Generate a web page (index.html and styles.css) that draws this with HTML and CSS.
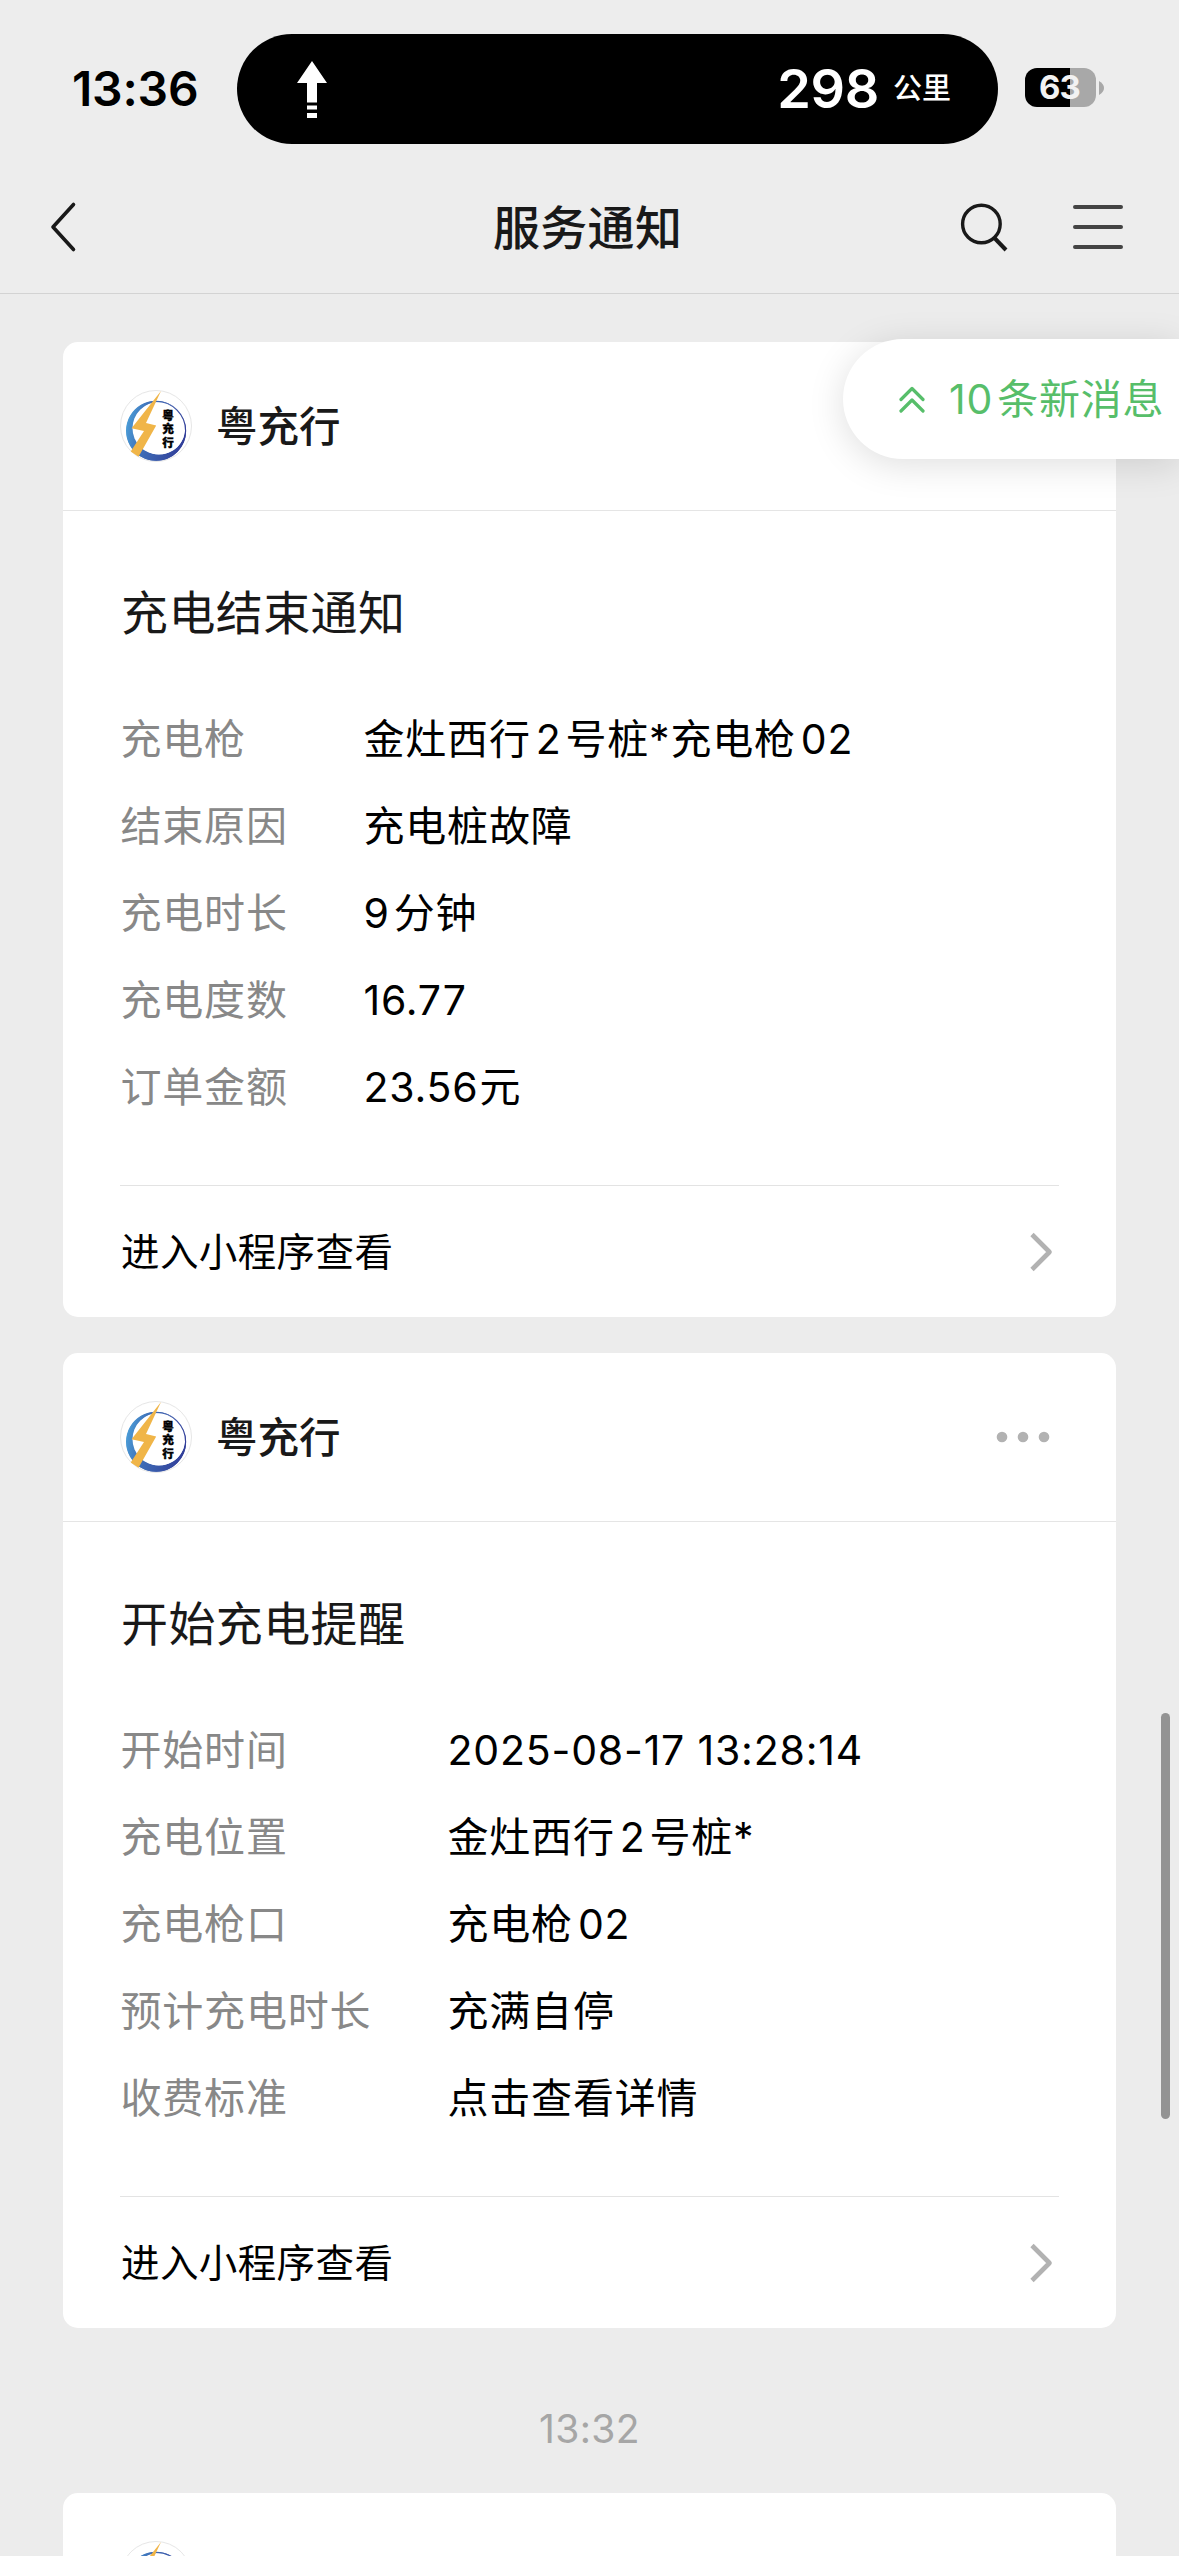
FILE: index.html
```html
<!DOCTYPE html>
<html lang="zh-CN">
<head>
<meta charset="utf-8">
<title>服务通知</title>
<link rel="stylesheet" href="styles.css">
</head>
<body>
<svg class="defs" width="0" height="0" aria-hidden="true">
  <defs>
    <linearGradient id="ring" x1="0" y1="0.4" x2="1" y2="0.6">
      <stop offset="0" stop-color="#4a9bd6"/>
      <stop offset="0.3" stop-color="#3f6fb8"/>
      <stop offset="1" stop-color="#303c98"/>
    </linearGradient>
    <symbol id="avatar" viewBox="0 0 72 72">
      <circle cx="36" cy="36" r="35.500" fill="#fff" stroke="#e6e6e6"/>
      <path fill="url(#ring)" fill-rule="evenodd" d="M36 10.800a30 30 0 1 0 .01 0zM39.200 12.300a26 26 0 1 1-.01 0z"/>
      <circle cx="38.800" cy="38.300" r="26.300" fill="#fff"/>
      <circle cx="36.300" cy="40.800" r="29.300" fill="none" stroke="url(#ring)" stroke-width="1.200"/>
      <path fill="#f0b548" d="M41 1 11.500 38.300 24 41 10.700 61.500 18.500 66.700 36.200 35.500 26 33z"/>
      <g class="avatar-text"><text x="42.300" y="29.500">粤</text><text x="42.300" y="43.300">充</text><text x="42.300" y="57">行</text></g>
    </symbol>
    <symbol id="arrow" viewBox="0 0 24 40"><path d="M3 2.500 20.500 20 3 37.500" fill="none" stroke="#b2b2b2" stroke-width="4.600" stroke-linejoin="round"/></symbol>
  </defs>
</svg>
<div class="screen">
  <header class="top">
    <div class="status">
      <span class="clock">13:36</span>
      <div class="island">
        <svg width="32" height="57" viewBox="0 0 32 57" fill="#fff"><path d="M16 0 31 22H21V41.500H11V22H1zM11 44.500h10v4H11zM11 52h10v5H11z"/></svg>
        <div class="distance"><b>298</b><span>公里</span></div>
      </div>
      <div class="battery"><span>63</span></div>
      <svg class="nub" width="5" height="14" viewBox="0 0 5 14"><path d="M0 0Q5 3 5 7T0 14z" fill="#a8a8a8"/></svg>
    </div>
    <nav class="nav">
      <svg class="back" width="28" height="52" viewBox="0 0 28 52" fill="none" stroke="#191919" stroke-width="3.600" stroke-linecap="round" stroke-linejoin="round"><path d="M24.500 3.500 4 26 24.500 48.500"/></svg>
      <h1>服务通知</h1>
      <svg class="search" width="48" height="50" viewBox="0 0 48 50" fill="none" stroke="#191919" stroke-width="3.400"><circle cx="21.400" cy="22" r="18.800"/><path d="M34 35.500 46 48" stroke-width="4"/></svg>
      <svg class="menu" width="50" height="44" viewBox="0 0 50 44" stroke="#444" stroke-width="4" stroke-linecap="round"><path d="M2 2h46M2 22h46M2 42h46"/></svg>
    </nav>
  </header>

  <main class="feed">
    <article class="card">
      <div class="card-head"><svg class="avatar"><use href="#avatar"/></svg><span class="name">粤充行</span></div>
      <div class="card-body">
        <h2>充电结束通知</h2>
        <dl class="rows">
          <dt>充电枪</dt><dd>金灶西行<i class="mid">2</i>号桩*充电枪<i class="end">02</i></dd>
          <dt>结束原因</dt><dd>充电桩故障</dd>
          <dt>充电时长</dt><dd><i class="start">9</i>分钟</dd>
          <dt>充电度数</dt><dd>16.77</dd>
          <dt>订单金额</dt><dd><i class="start amount">23.56</i>元</dd>
        </dl>
        <div class="more"><span>进入小程序查看</span><svg class="go"><use href="#arrow"/></svg></div>
      </div>
    </article>

    <article class="card">
      <div class="card-head"><svg class="avatar"><use href="#avatar"/></svg><span class="name">粤充行</span><svg class="dots" width="54" height="12" viewBox="0 0 54 12" fill="#b2b2b2"><circle cx="6" cy="6" r="5.300"/><circle cx="27" cy="6" r="5.300"/><circle cx="48" cy="6" r="5.300"/></svg></div>
      <div class="card-body">
        <h2>开始充电提醒</h2>
        <dl class="rows wide">
          <dt>开始时间</dt><dd>2025-08-17 13:28:14</dd>
          <dt>充电位置</dt><dd>金灶西行<i class="mid">2</i>号桩*</dd>
          <dt>充电枪口</dt><dd>充电枪<i class="end">02</i></dd>
          <dt>预计充电时长</dt><dd>充满自停</dd>
          <dt>收费标准</dt><dd>点击查看详情</dd>
        </dl>
        <div class="more"><span>进入小程序查看</span><svg class="go"><use href="#arrow"/></svg></div>
      </div>
    </article>

    <time class="stamp">13:32</time>

    <article class="card">
      <div class="card-head"><svg class="avatar"><use href="#avatar"/></svg></div>
    </article>
  </main>

  <div class="unread">
    <svg width="26" height="27" viewBox="0 0 26 27" fill="none" stroke="#57be6a" stroke-width="3.200" stroke-linecap="round" stroke-linejoin="round"><path d="M2 13.500 13 2.500 24 13.500M2 25 13 14 24 25"/></svg>
    <span><i class="start">10</i>条新消息</span>
  </div>
  <div class="scrollbar"></div>
</div>
</body>
</html>
```
FILE: styles.css
```css
* { box-sizing: border-box; margin: 0; padding: 0; }

body {
  background: #ececec;
  font-family: Inter, "Noto Sans CJK SC", sans-serif;
  color: #000;
}

i { font-style: normal; }
svg { display: block; flex: none; }
.defs { position: absolute; }

.screen {
  position: relative;
  width: 1179px;
  height: 2556px;
  overflow: hidden;
}

/* status bar and navigation */
.top {
  height: 294px;
  background: #ededed;
  border-bottom: 1px solid #d3d3d3;
}

.status {
  display: flex;
  align-items: center;
  height: 178px;
  padding-left: 72px;
}

.clock {
  width: 165px;
  margin-top: -1px;
  font-size: 48px;
  font-weight: 600;
  line-height: 60px;
  letter-spacing: -0.2px;
}

.island {
  display: flex;
  align-items: center;
  justify-content: space-between;
  width: 761px;
  height: 110px;
  padding: 0 47px 0 59px;
  border-radius: 55px;
  background: #000;
  color: #fff;
}

.distance { display: flex; align-items: center; gap: 14px; }
.distance b { font-size: 54px; font-weight: 600; line-height: 60px; letter-spacing: -0.3px; }
.distance span { font-size: 29px; font-weight: 500; line-height: 40px; }

.battery {
  width: 71px;
  height: 39px;
  margin: -3px 3px 0 27px;
  padding-right: 2px;
  border-radius: 12px;
  background: linear-gradient(90deg, #000 45px, #a8a8a8 45px);
  color: #f2f2f2;
  font-size: 33px;
  font-weight: 700;
  line-height: 39px;
  text-align: center;
  letter-spacing: -0.8px;
}
.nub { margin-top: -3px; }

.nav {
  display: grid;
  grid-template-columns: 28px 1fr 48px 50px;
  align-items: center;
  height: 98px;
  padding: 0 56px 0 49px;
}
.nav h1 {
  margin-left: 416px;
  padding-top: 1px;
  color: #191919;
  font-size: 47px;
  font-weight: 500;
  line-height: 60px;
  letter-spacing: 0.3px;
  white-space: nowrap;
}
.search { margin-left: -65px; }

/* message list */
.feed {
  display: flex;
  flex-direction: column;
  padding: 48px 63px 0;
}

.card {
  flex: none;
  height: 975px;
  margin-bottom: 36px;
  border-radius: 15px;
  background: #fff;
}

.card-head {
  display: flex;
  align-items: center;
  height: 169px;
  padding: 0 66px 0 57px;
  border-bottom: 1px solid #e5e5e5;
}
.avatar { width: 72px; height: 72px; }
.avatar-text {
  fill: #000;
  stroke: #000;
  stroke-width: 0.4px;
  font-size: 11.5px;
  font-weight: 900;
}
.name {
  margin-left: 24px;
  padding-top: 1px;
  color: #191919;
  font-size: 41.5px;
  font-weight: 500;
  line-height: 60px;
}
.dots { margin-left: auto; }

.card-body { padding: 67px 57px 0; }
.card-body h2 {
  padding-left: 1px;
  color: #191919;
  font-size: 47px;
  font-weight: 400;
  line-height: 70px;
  letter-spacing: 0.4px;
}

.rows {
  display: grid;
  grid-template-columns: 243px 1fr;
  grid-auto-rows: 87px;
  margin: 48px 0 54px;
  padding-left: 0.5px;
  font-size: 41px;
  line-height: 87px;
  letter-spacing: 0.8px;
  white-space: nowrap;
}
.rows.wide { grid-template-columns: 327px 1fr; }
.rows dt { color: #888; }
.mid { margin: 0 4px 0 5px; }
.end { margin-left: 5px; }
.start { margin-right: 4px; }
.amount { margin-right: 1px; }

.more {
  display: flex;
  align-items: center;
  justify-content: space-between;
  height: 132px;
  padding: 0 6px 0 1px;
  border-top: 1px solid #e3e3e3;
  font-size: 38.5px;
  line-height: 60px;
  letter-spacing: 0.4px;
}
.go { width: 24px; height: 40px; }

.stamp {
  height: 129px;
  color: #a6a6a6;
  font-size: 39px;
  line-height: 130px;
  letter-spacing: 0.4px;
  text-align: center;
}

/* floating layers over the list */
.unread {
  position: absolute;
  top: 339px;
  right: 0;
  display: flex;
  align-items: center;
  gap: 24px;
  width: 336px;
  height: 120px;
  padding-left: 56px;
  border-radius: 60px 0 0 60px;
  background: #fff;
  box-shadow: 0 6px 36px rgba(0, 0, 0, 0.13);
  color: #57be6a;
  font-size: 41px;
  line-height: 61px;
  letter-spacing: 0.8px;
  white-space: nowrap;
}

.scrollbar {
  position: absolute;
  top: 1713px;
  right: 9px;
  width: 9px;
  height: 406px;
  border-radius: 5px;
  background: #939393;
}
```
